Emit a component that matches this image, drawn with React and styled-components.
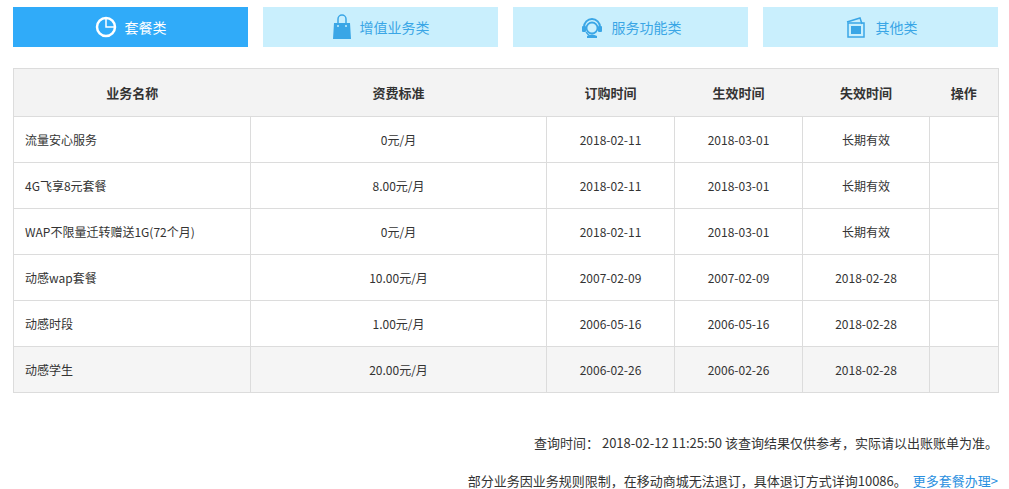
import React from 'react';
import styled, { createGlobalStyle } from 'styled-components';

const Global = createGlobalStyle`
  body { margin: 0; background: #fff; font-family: "Microsoft YaHei", "Noto Sans CJK SC", sans-serif; color: #333; }
`;

const Wrap = styled.div`
  padding: 7px 11px 0 13px;
`;

const Tabs = styled.div`
  display: grid;
  grid-template-columns: repeat(4, 235px);
  gap: 15px;
`;

const Tab = styled.div`
  height: 40px;
  display: flex;
  align-items: center;
  justify-content: center;
  gap: 8px;
  font-size: 14px;
  background: ${(p) => (p.active ? '#30abf9' : '#c9effd')};
  color: ${(p) => (p.active ? '#fff' : '#3aa6e6')};
`;

const Table = styled.table`
  margin-top: 21px;
  width: 985px;
  border-collapse: collapse;
  border: 1px solid #dcdcdc;
  font-size: 12px;
  table-layout: fixed;
`;

const Th = styled.th`
  height: 45px;
  background: #f3f3f3;
  font-size: 13px;
  font-weight: bold;
  color: #333;
  text-align: center;
`;

const Tr = styled.tr`
  background: ${(p) => (p.shade ? '#f5f5f5' : '#fff')};
`;

const Td = styled.td`
  height: 45px;
  border: 1px solid #dcdcdc;
  text-align: ${(p) => (p.left ? 'left' : 'center')};
  padding: ${(p) => (p.left ? '0 0 0 11px' : '0')};
  color: #333;
`;

const Footer = styled.div`
  margin-top: 40px;
  text-align: right;
  font-size: 13px;
  color: #333;
  line-height: 20px;
  & + & { margin-top: 18px; }
`;

const Link = styled.a`
  color: #2a8fe0;
  text-decoration: none;
  margin-left: 6px;
`;

const PieIcon = () => (
  <svg width="22" height="22" viewBox="0 0 22 22">
    <circle cx="11" cy="11" r="9" fill="none" stroke="#fff" strokeWidth="2.5" />
    <path d="M11 3v8h8" fill="none" stroke="#fff" strokeWidth="1.5" />
  </svg>
);
const BagIcon = () => (
  <svg width="20" height="26" viewBox="0 0 20 26">
    <path d="M6 9V5a4 4 0 0 1 8 0v4" fill="none" stroke="#3aa6e6" strokeWidth="1.5" />
    <path d="M2 9h16l1 16H1z" fill="#3aa6e6" />
    <circle cx="6" cy="12" r="1" fill="#c9effd" />
    <circle cx="14" cy="12" r="1" fill="#c9effd" />
  </svg>
);
const ServiceIcon = () => (
  <svg width="24" height="24" viewBox="0 0 24 24">
    <path d="M4 12a8 8 0 0 1 16 0" fill="none" stroke="#3aa6e6" strokeWidth="2" />
    <rect x="2" y="11" width="4" height="6" rx="1" fill="#3aa6e6" />
    <rect x="18" y="11" width="4" height="6" rx="1" fill="#3aa6e6" />
    <circle cx="12" cy="13" r="5.5" fill="none" stroke="#3aa6e6" strokeWidth="1.8" />
    <path d="M6 17q4 5 6 5" fill="none" stroke="#3aa6e6" strokeWidth="1.3" />
    <path d="M7 21q5-3 10 0v2H7z" fill="#3aa6e6" />
  </svg>
);
const OtherIcon = () => (
  <svg width="24" height="24" viewBox="0 0 24 24">
    <path d="M3 7l13-4 2 6" fill="none" stroke="#3aa6e6" strokeWidth="1.5" />
    <rect x="4" y="8" width="16" height="14" fill="none" stroke="#3aa6e6" strokeWidth="1.5" />
    <rect x="7" y="11" width="10" height="8" fill="#3aa6e6" />
  </svg>
);

const rows = [
  ['流量安心服务', '0元/月', '2018-02-11', '2018-03-01', '长期有效'],
  ['4G飞享8元套餐', '8.00元/月', '2018-02-11', '2018-03-01', '长期有效'],
  ['WAP不限量迁转赠送1G(72个月)', '0元/月', '2018-02-11', '2018-03-01', '长期有效'],
  ['动感wap套餐', '10.00元/月', '2007-02-09', '2007-02-09', '2018-02-28'],
  ['动感时段', '1.00元/月', '2006-05-16', '2006-05-16', '2018-02-28'],
  ['动感学生', '20.00元/月', '2006-02-26', '2006-02-26', '2018-02-28'],
];

export default function App() {
  return (
    <Wrap>
      <Global />
      <Tabs>
        <Tab active><PieIcon />套餐类</Tab>
        <Tab><BagIcon />增值业务类</Tab>
        <Tab><ServiceIcon />服务功能类</Tab>
        <Tab><OtherIcon />其他类</Tab>
      </Tabs>
      <Table>
        <colgroup>
          <col style={{ width: 237 }} />
          <col style={{ width: 296 }} />
          <col style={{ width: 128 }} />
          <col style={{ width: 128 }} />
          <col style={{ width: 127 }} />
          <col style={{ width: 69 }} />
        </colgroup>
        <thead>
          <tr>
            <Th>业务名称</Th>
            <Th>资费标准</Th>
            <Th>订购时间</Th>
            <Th>生效时间</Th>
            <Th>失效时间</Th>
            <Th>操作</Th>
          </tr>
        </thead>
        <tbody>
          {rows.map((r, i) => (
            <Tr key={i} shade={i === rows.length - 1}>
              <Td left>{r[0]}</Td>
              <Td>{r[1]}</Td>
              <Td>{r[2]}</Td>
              <Td>{r[3]}</Td>
              <Td>{r[4]}</Td>
              <Td />
            </Tr>
          ))}
        </tbody>
      </Table>
      <Footer>查询时间： 2018-02-12 11:25:50 该查询结果仅供参考，实际请以出账账单为准。</Footer>
      <Footer>
        部分业务因业务规则限制，在移动商城无法退订，具体退订方式详询10086。
        <Link href="#">更多套餐办理&gt;</Link>
      </Footer>
    </Wrap>
  );
}
